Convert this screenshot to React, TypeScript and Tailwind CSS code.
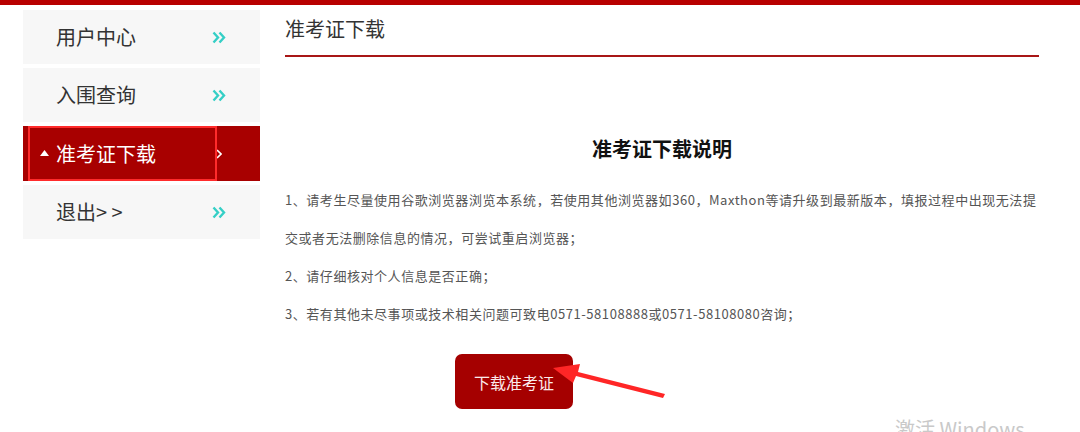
import React from "react"

const font = { fontFamily: '"Noto Sans CJK SC", "Microsoft YaHei", sans-serif' }

const Chevrons = () => (
    <svg width="14" height="13" viewBox="0 0 14 13" fill="none">
        <polyline points="1.5,1.5 6,6.5 1.5,11.5" stroke="#35cfc6" strokeWidth="2.4" />
        <polyline points="7.5,1.5 12,6.5 7.5,11.5" stroke="#35cfc6" strokeWidth="2.4" />
    </svg>
)

const MenuItem = ({ label }: { label: string }) => (
    <div className="h-[54px] bg-[#f7f7f7] flex items-center justify-between pl-[33px] pr-[34px]">
        <span className="text-[20px] text-[#333]">{label}</span>
        <Chevrons />
    </div>
)

export default function App() {
    return (
        <div className="relative w-[1080px] h-[432px] overflow-hidden bg-white" style={font}>
            {/* Top Bar */}
            <div className="h-[5px] bg-[#b80000]" />

            <div className="flex pl-[23px] gap-[25px]">

                {/* Sidebar */}
                <div className="w-[237px] mt-[5px] flex flex-col gap-[4px]">
                    <MenuItem label="用户中心" />
                    <MenuItem label="入围查询" />

                    <div className="relative h-[55px] bg-[#a80000] flex items-center justify-between pl-[17px] pr-[38px]">
                        <div className="flex items-center">
                            <svg width="9" height="6" viewBox="0 0 9 6" className="mr-[7px] -mt-[1px]">
                                <polygon points="0,6 4.5,0 9,6" fill="#fff" />
                            </svg>
                            <span className="text-[20px] text-white">准考证下载</span>
                        </div>
                        <svg width="6" height="10" viewBox="0 0 6 10" fill="none">
                            <polyline points="1,1 5,5 1,9" stroke="#fff" strokeWidth="1.6" />
                        </svg>
                        <div className="absolute left-[5px] top-0 w-[189px] h-[55px] border-2 border-[#ff2b2b]" />
                    </div>

                    <MenuItem label="退出> >" />
                </div>

                {/* Main */}
                <div className="w-[754px]">
                    <div className="h-[52px] flex items-center border-b-2 border-[#a81616]">
                        <span className="text-[20px] text-[#333] -mt-[2px]">准考证下载</span>
                    </div>

                    <h2 className="mt-[78px] text-center text-[20px] leading-[28px] font-bold text-[#111]">
                        准考证下载说明
                    </h2>

                    <div className="mt-[18px] text-[13px] leading-[38px] tracking-[0.55px] text-[#555] whitespace-nowrap">
                        <p>
                            1、请考生尽量使用谷歌浏览器浏览本系统，若使用其他浏览器如360，Maxthon等请升级到最新版本，填报过程中出现无法提
                            <br />
                            交或者无法删除信息的情况，可尝试重启浏览器；
                        </p>
                        <p>2、请仔细核对个人信息是否正确；</p>
                        <p>3、若有其他未尽事项或技术相关问题可致电0571-58108888或0571-58108080咨询；</p>
                    </div>

                    <button className="mt-[21px] ml-[170px] w-[118px] h-[55px] rounded-[7px] bg-[#a50000] text-[#fbeaea] text-[16px]">
                        下载准考证
                    </button>
                </div>
            </div>

            {/* Annotation arrow */}
            <svg className="absolute left-0 top-0" width="1080" height="432">
                <polygon points="553,368 580,364 578,372 665,394 663,398 576,376 573,383" fill="#ff2626" />
            </svg>

            {/* Watermark */}
            <div className="absolute left-[895px] top-[415px] text-[20px] text-[#c9c9c9] leading-[28px]">
                激活 Windows
            </div>
        </div>
    )
}
